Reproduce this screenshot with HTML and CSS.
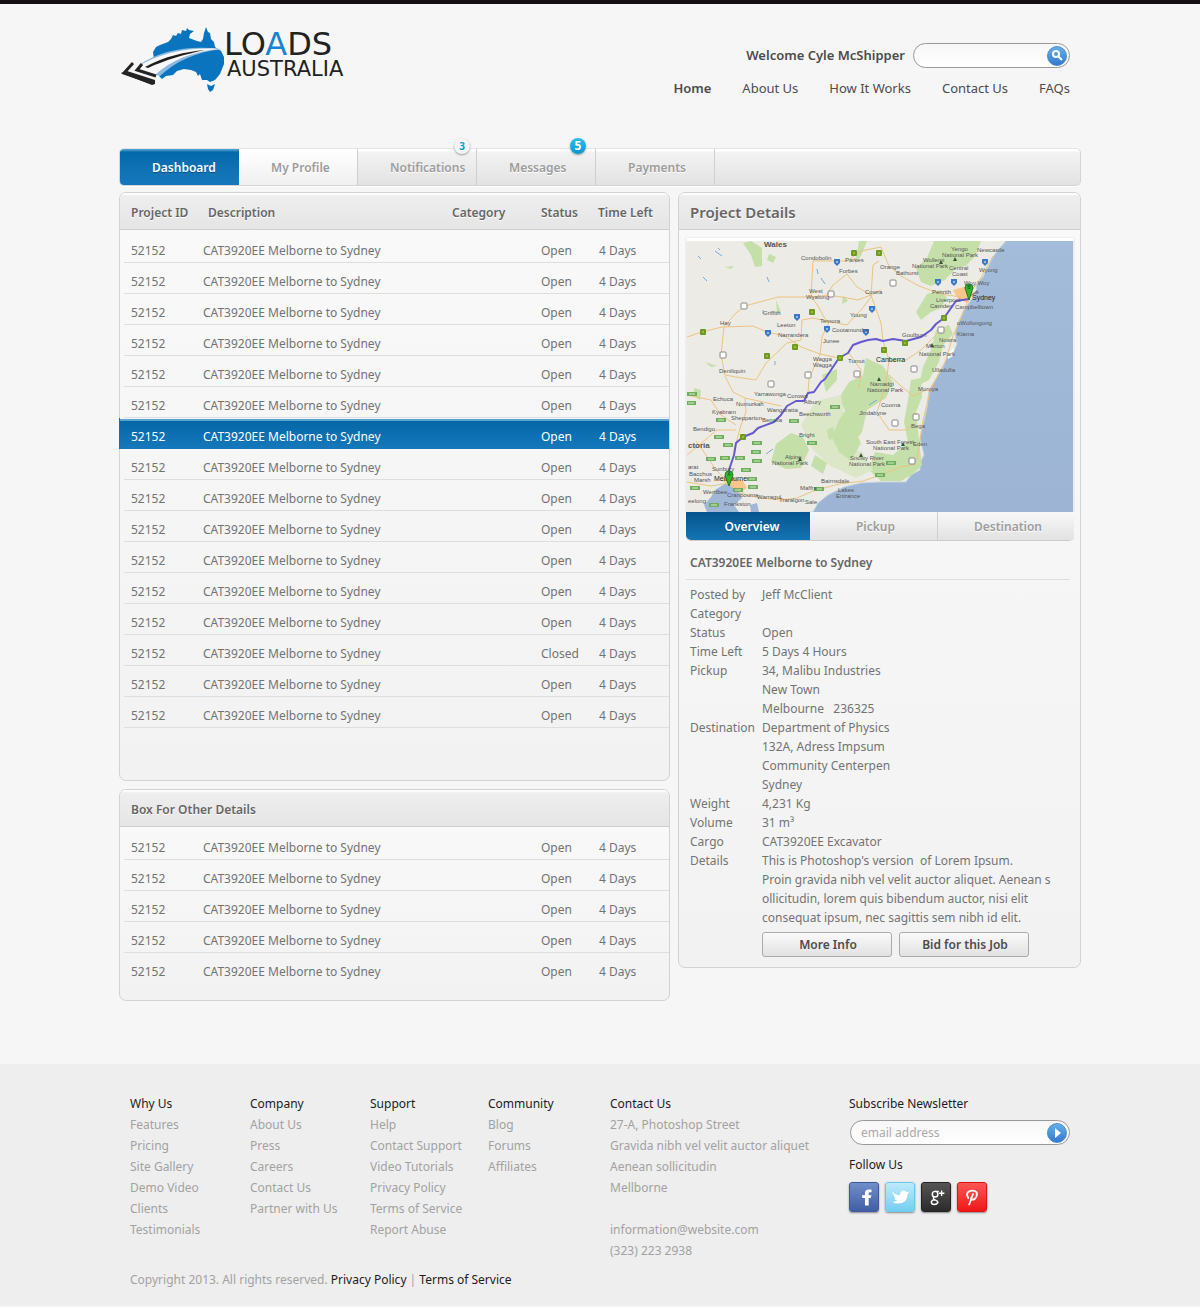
FILE: index.html
```html
<!DOCTYPE html>
<html lang="en">
<head>
<meta charset="utf-8">
<meta name="viewport" content="width=device-width, initial-scale=1">
<title>Loads Australia - Dashboard</title>
<link rel="stylesheet" href="styles.css">
</head>
<body>
<div class="wrap">
  <header class="header">
    <a class="logo" href="#" aria-label="Loads Australia">
      <svg width="236" height="72" viewBox="119 24 236 72">
        <path fill="#0a74bf" d="M154 60L153 52L156 47L160 45L168 42L171 39L173 35L176 36L178 33L181 34L182 30L186 31L187 28L189 30L194 31L190 34L189 38L197 41L201 42L203 39L204 33L206 27L208 32L210 33L211 39L214 42L215 47L221 51L224 57L224 64L220 74L215 80L210 82L207 80L202 80L200 74L198 76L196 72L191 70L184 69L177 71L173 75L166 76L162 79L159 76L162 71Z"/>
        <path fill="#0a74bf" d="M207 84L211 86L215 84L213 90L210 92L208 89Z"/>
        <path fill="#8db9de" d="M139 65C160 50 190 45 222 49C195 52 175 62 160 76L147 73Z"/>
        <path fill="#f7f7f7" d="M136 68C160 52 190 47 221 49C192 51 170 61 155 75L143 71Z"/>
        <path fill="#1d1d1d" d="M145 67C165 56 185 52 205 50C186 54 165 60 148 68Z"/>
        <path fill="none" stroke="#242424" stroke-width="3" d="M133 63L124 73L153 83"/>
        <path fill="none" stroke="#242424" stroke-width="3" d="M142 64L137 70L156 76"/>
        <path fill="#242424" d="M121 73L127 71L155 80V84L152 85Z"/>
        <text class="logo-text" x="224" y="55" font-size="32" fill="#222">LO<tspan fill="#1684d1">A</tspan>DS</text>
        <text class="logo-text" x="227" y="76" font-size="21" fill="#222">AUSTRALIA</text>
      </svg>
    </a>
    <div class="header-side">
      <form class="search-row">
        <label class="welcome" for="search">Welcome Cyle McShipper</label>
        <span class="pill pill-search">
          <input id="search" type="search">
          <button class="round" type="button" aria-label="Search"><svg width="20" height="20" viewBox="0 0 20 20"><circle cx="9" cy="8" r="3" fill="none" stroke="#fff" stroke-width="2"/><path d="M11 10L15 14" stroke="#fff" stroke-width="2"/></svg></button>
        </span>
      </form>
      <nav class="topnav">
        <a class="current" href="#">Home</a><a href="#">About Us</a><a href="#">How It Works</a><a href="#">Contact Us</a><a href="#">FAQs</a>
      </nav>
    </div>
  </header>

  <nav class="tabs">
    <a class="tab tab-active" href="#">Dashboard</a>
    <a class="tab tab-light" href="#">My Profile</a>
    <a class="tab" href="#">Notifications<span class="badge">3</span></a>
    <a class="tab" href="#">Messages<span class="badge badge-blue">5</span></a>
    <a class="tab" href="#">Payments</a>
  </nav>

  <main class="columns">
    <div class="stack">
      <section class="panel panel-projects">
        <table class="jobs">
          <colgroup><col class="c-id"><col class="c-desc"><col class="c-cat"><col class="c-status"><col class="c-time"></colgroup>
          <thead><tr><th>Project ID</th><th>Description</th><th>Category</th><th>Status</th><th>Time Left</th></tr></thead>
          <tbody>
            <tr><td>52152</td><td>CAT3920EE Melborne to Sydney</td><td></td><td>Open</td><td>4 Days</td></tr>
            <tr><td>52152</td><td>CAT3920EE Melborne to Sydney</td><td></td><td>Open</td><td>4 Days</td></tr>
            <tr><td>52152</td><td>CAT3920EE Melborne to Sydney</td><td></td><td>Open</td><td>4 Days</td></tr>
            <tr><td>52152</td><td>CAT3920EE Melborne to Sydney</td><td></td><td>Open</td><td>4 Days</td></tr>
            <tr><td>52152</td><td>CAT3920EE Melborne to Sydney</td><td></td><td>Open</td><td>4 Days</td></tr>
            <tr><td>52152</td><td>CAT3920EE Melborne to Sydney</td><td></td><td>Open</td><td>4 Days</td></tr>
            <tr class="selected"><td>52152</td><td>CAT3920EE Melborne to Sydney</td><td></td><td>Open</td><td>4 Days</td></tr>
            <tr><td>52152</td><td>CAT3920EE Melborne to Sydney</td><td></td><td>Open</td><td>4 Days</td></tr>
            <tr><td>52152</td><td>CAT3920EE Melborne to Sydney</td><td></td><td>Open</td><td>4 Days</td></tr>
            <tr><td>52152</td><td>CAT3920EE Melborne to Sydney</td><td></td><td>Open</td><td>4 Days</td></tr>
            <tr><td>52152</td><td>CAT3920EE Melborne to Sydney</td><td></td><td>Open</td><td>4 Days</td></tr>
            <tr><td>52152</td><td>CAT3920EE Melborne to Sydney</td><td></td><td>Open</td><td>4 Days</td></tr>
            <tr><td>52152</td><td>CAT3920EE Melborne to Sydney</td><td></td><td>Open</td><td>4 Days</td></tr>
            <tr><td>52152</td><td>CAT3920EE Melborne to Sydney</td><td></td><td>Closed</td><td>4 Days</td></tr>
            <tr><td>52152</td><td>CAT3920EE Melborne to Sydney</td><td></td><td>Open</td><td>4 Days</td></tr>
            <tr><td>52152</td><td>CAT3920EE Melborne to Sydney</td><td></td><td>Open</td><td>4 Days</td></tr>
          </tbody>
        </table>
      </section>
      <section class="panel panel-other">
        <h2 class="panel-head">Box For Other Details</h2>
        <table class="jobs">
          <colgroup><col class="c-id"><col class="c-desc"><col class="c-cat"><col class="c-status"><col class="c-time"></colgroup>
          <tbody>
            <tr><td>52152</td><td>CAT3920EE Melborne to Sydney</td><td></td><td>Open</td><td>4 Days</td></tr>
            <tr><td>52152</td><td>CAT3920EE Melborne to Sydney</td><td></td><td>Open</td><td>4 Days</td></tr>
            <tr><td>52152</td><td>CAT3920EE Melborne to Sydney</td><td></td><td>Open</td><td>4 Days</td></tr>
            <tr><td>52152</td><td>CAT3920EE Melborne to Sydney</td><td></td><td>Open</td><td>4 Days</td></tr>
            <tr class="last"><td>52152</td><td>CAT3920EE Melborne to Sydney</td><td></td><td>Open</td><td>4 Days</td></tr>
          </tbody>
        </table>
      </section>
    </div>

    <section class="panel panel-details">
      <h2 class="panel-head panel-head-large">Project Details</h2>
      <div class="details">
        <svg class="map" viewBox="686 241 386 271" role="img" aria-label="Route from Melbourne to Sydney">
          <defs>
            <g id="gs"><rect x="-3" y="-3" width="6" height="6" rx="1" fill="#6d9a22"/><path d="M-1 0H1" stroke="#d8d840"/></g>
            <g id="bs"><path d="M-3 -3H3V1L0 4L-3 1Z" fill="#3a78c8"/><path d="M-1 0H1" stroke="#fff"/></g>
            <g id="ws"><rect x="-3" y="-3" width="6" height="6" rx="1" fill="#fff" stroke="#888"/></g>
            <g id="gr"><rect x="-5" y="-2" width="10" height="4" fill="#6fae5c"/><path d="M-3 0H3" stroke="#d5ecc8"/></g>
            <g id="pk"><path d="M0 -3L2 1H-2Z" fill="#345334"/></g>
            <linearGradient id="sea" x1="0" y1="0" x2="0" y2="1"><stop offset="0" stop-color="#a2bcd9"/><stop offset="1" stop-color="#9db4d4"/></linearGradient>
          </defs>
          <rect x="686" y="241" width="386" height="271" fill="url(#sea)"/>
          <path fill="#ecebe6" stroke="#c4d2dc" d="M680 235H1010L1005 241L997 250L992 257L987 267L982 277L975 285L976 293L970 300L963 310L957 323L954 333L956 344L953 351L948 353L942 367L935 379L928 390L926 408L922 425L919 438L923 455L919 463L919 470L910 475L905 482L880 482L860 483L843 487L827 495L817 503L812 512L680 516Z"/>
          <g fill="#c5dfa8">
            <path d="M933 241H980L974 256L965 266L955 268L944 280L930 286L920 282L915 268L926 258Z"/>
            <path d="M926 294L940 290L946 298L940 308L930 312L920 320L915 312Z"/>
            <path d="M935 330L948 325L952 334L942 345L938 362L928 380L918 385L922 367L930 350Z"/>
            <path d="M910 380L920 378L921 397L915 412L918 440L921 465L912 474L900 481L880 481L868 470L874 452L892 455L907 442L903 422L907 400Z"/>
            <path d="M865 358L882 366L892 382L885 398L866 410L861 432L850 447L843 440L846 415L838 398L848 382L862 375Z"/>
            <path d="M775 444L790 433L802 437L808 450L800 468L785 469L770 462Z"/>
            <path d="M750 241L761 248L761 266L754 267L750 255L742 243Z"/>
            <path d="M768 254L775 257L772 263L766 260ZM858 241H866L860 256L854 264ZM775 300L780 312L776 314ZM842 295L847 301L841 304ZM704 362L716 366L710 367ZM693 388L700 390L699 400L693 396ZM724 267L733 266L730 269Z"/>
            <path d="M821 375L836 369L836 380L825 392ZM814 455L826 463L822 474L810 466Z"/>
          </g>
          <path fill="#dce7c8" d="M815 401L840 395L844 425L835 442L861 452L872 470L855 478L828 465L812 450L800 425Z"/>
          <path fill="#c5dfa8" d="M838 420L846 408L852 428L860 443L850 461L838 452L831 437ZM826 430L832 427L834 438L828 440Z"/>
          <path fill="#fff" d="M947 353L953 348L952 356L947 359Z"/>
          <path fill="#a0b8d6" d="M714 490L725 483L735 487L741 498L733 505L738 512H706L703 505L710 497ZM749 505L756 503L758 512H750Z"/>
          <path fill="#f9c58b" d="M720 480L730 476L742 481L746 488L738 493L727 484ZM952 290L966 286L973 293L967 303L957 299Z"/>
          <g fill="none" stroke="#79a7dd"><path d="M714 251L721 256M697 256L700 259M702 277L706 281M717 248L719 250M766 277L768 282M816 269L817 274M820 278L824 284M762 310V314M774 361V365M765 454L772 449M868 405L876 400"/></g>
          <g fill="none" stroke="#edc37f" stroke-width="1">
            <path d="M686 337L701 332L721 327L752 326L766 332L784 336L800 347L819 354L838 358"/>
            <path d="M723 327L735 313L744 306L777 297L812 297L828 295L846 298L857 300L870 295L880 290"/>
            <path d="M723 327L720 355L724 375L735 377L755 380L765 363L786 343L800 340L801 320L812 318L830 322L846 325L852 318L860 310L870 297L872 265L878 261"/>
            <path d="M812 261L810 296L817 306L824 319L828 322L821 337L819 355L808 378L807 394"/>
            <path d="M812 261H846L860 251L880 247L888 266L900 276L918 286L940 294L960 297"/>
            <path d="M870 295L880 323L882 341L888 360L886 376L880 400L876 412L888 430L905 430L914 423"/>
            <path d="M870 295L856 287L846 274L832 285L825 296"/>
            <path d="M724 376L732 392L744 398L745 412L740 425L735 443M744 398L762 402L780 406M686 395L710 400L720 415L735 425"/>
            <path d="M728 483L715 470L705 455L695 441M728 483L745 495L760 498L780 500L796 498L812 491L838 484L862 481L880 475L900 467L915 464"/>
            <path d="M888 361L905 360L920 350L940 330M888 375L900 386L912 396L925 390M968 298L960 318L952 336L944 362L930 388L922 420L916 460"/>
            <path d="M992 256L978 281L967 295M848 353L860 370L858 388M686 455L704 440L716 430L735 430M686 482L710 486L728 483"/>
          </g>
          <path fill="none" stroke="#6557d0" stroke-width="2" stroke-linejoin="round" d="M728 483L728 470L733 455L735 443L742 437L752 433L757 428L773 422L780 415L786 406L795 401L803 401L807 393L813 392L820 382L824 379L832 367L838 358L847 353L852 345L860 342L867 340L875 339L882 341L892 339L905 341L920 337L930 330L935 324L943 318L950 308L955 301L968 299"/>
          <use href="#gs" x="853" y="253"/><use href="#gs" x="878" y="253"/><use href="#gs" x="811" y="312"/><use href="#gs" x="702" y="332"/><use href="#gs" x="794" y="347"/><use href="#gs" x="766" y="356"/><use href="#gs" x="839" y="358"/><use href="#gs" x="943" y="318"/><use href="#gs" x="904" y="343"/><use href="#gs" x="883" y="350"/><use href="#gs" x="742" y="437"/>
          <use href="#bs" x="836" y="262"/><use href="#bs" x="871" y="309"/><use href="#bs" x="796" y="317"/><use href="#bs" x="767" y="333"/><use href="#bs" x="826" y="329"/><use href="#bs" x="865" y="332"/><use href="#bs" x="937" y="282"/><use href="#bs" x="953" y="282"/><use href="#bs" x="984" y="262"/>
          <use href="#ws" x="743" y="306"/><use href="#ws" x="830" y="294"/><use href="#ws" x="722" y="355"/><use href="#ws" x="807" y="375"/><use href="#ws" x="856" y="374"/><use href="#ws" x="770" y="384"/><use href="#ws" x="892" y="283"/><use href="#ws" x="940" y="330"/><use href="#ws" x="913" y="369"/><use href="#ws" x="915" y="417"/><use href="#ws" x="894" y="423"/><use href="#ws" x="911" y="461"/>
          <use href="#gr" x="691" y="394"/><use href="#gr" x="690" y="403"/><use href="#gr" x="720" y="420"/><use href="#gr" x="718" y="437"/><use href="#gr" x="727" y="445"/><use href="#gr" x="756" y="443"/><use href="#gr" x="755" y="452"/><use href="#gr" x="756" y="461"/><use href="#gr" x="739" y="458"/><use href="#gr" x="710" y="459"/><use href="#gr" x="724" y="458"/><use href="#gr" x="745" y="470"/><use href="#gr" x="751" y="479"/><use href="#gr" x="752" y="487"/><use href="#gr" x="694" y="488"/><use href="#gr" x="713" y="505"/><use href="#gr" x="793" y="421"/><use href="#gr" x="811" y="443"/><use href="#gr" x="834" y="407"/><use href="#gr" x="818" y="489"/><use href="#gr" x="890" y="463"/><use href="#gr" x="879" y="475"/><use href="#gr" x="737" y="490"/>
          <use href="#pk" x="940" y="263"/><use href="#pk" x="954" y="260"/><use href="#pk" x="931" y="346"/><use href="#pk" x="878" y="380"/><use href="#pk" x="799" y="460"/><use href="#pk" x="860" y="456"/><use href="#pk" x="902" y="445"/>
          <g class="map-labels">
            <text class="map-region" x="763" y="247">Wales</text><text class="map-region" x="687" y="448">ctoria</text>
            <text x="800" y="260">Condobolin</text><text x="844" y="262">Parkes</text><text x="838" y="273">Forbes</text><text x="808" y="293">West</text><text x="805" y="299">Wyalong</text><text x="864" y="294">Cowra</text><text x="762" y="315">Griffith</text><text x="719" y="325">Hay</text><text x="776" y="327">Leeton</text><text x="777" y="337">Narrandera</text><text x="819" y="323">Temora</text><text x="849" y="317">Young</text><text x="831" y="332">Cootamundra</text><text x="822" y="343">Junee</text><text x="812" y="361">Wagga</text><text x="812" y="367">Wagga</text><text x="847" y="363">Tumut</text><text x="718" y="373">Deniliquin</text>
            <text x="879" y="269">Orange</text><text x="895" y="275">Bathurst</text><text x="922" y="262">Wollemi</text><text x="911" y="268">National Park</text><text x="950" y="251">Yengo</text><text x="941" y="257">National Park</text><text x="976" y="252">Newcastle</text><text x="948" y="270">Central</text><text x="951" y="276">Coast</text><text x="978" y="272">Wyong</text><text x="963" y="285">Woy Woy</text><text x="931" y="294">Penrith</text><text x="935" y="302">Liverpool</text><text x="929" y="308">Camden</text><text x="954" y="309">Campbelltown</text><text class="map-city" x="971" y="300">Sydney</text><text x="956" y="325">oWollongong</text><text x="956" y="336">Kiama</text><text x="938" y="342">Nowra</text><text x="901" y="337">Goulburn</text><text x="925" y="348">Morton</text><text x="918" y="356">National Park</text><text class="map-city" x="875" y="362">Canberra</text><text x="931" y="372">Ulladulla</text><text x="869" y="386">Namadgi</text><text x="866" y="392">National Park</text><text x="917" y="391">Moruya</text><text x="880" y="407">Cooma</text><text x="910" y="428">Bega</text><text x="912" y="446">Eden</text><text x="865" y="444">South East Forest</text><text x="872" y="450">National Park</text><text x="858" y="415">Jindabyne</text>
            <text x="712" y="401">Echuca</text><text x="735" y="406">Numurkah</text><text x="753" y="396">Yarrawonga</text><text x="786" y="398">Corowa</text><text x="803" y="404">Albury</text><text x="711" y="414">Kyabram</text><text x="730" y="420">Shepparton</text><text x="766" y="412">Wangaratta</text><text x="761" y="422">Benalla</text><text x="798" y="416">Beechworth</text><text x="798" y="437">Bright</text><text x="692" y="431">Bendigo</text><text x="784" y="459">Alpine</text><text x="771" y="465">National Park</text><text x="849" y="460">Snowy River</text><text x="848" y="466">National Park</text><text x="820" y="483">Bairnsdale</text><text x="837" y="492">Lakes</text><text x="835" y="498">Entrance</text><text x="799" y="490">Maffra</text><text x="804" y="504">Sale</text><text x="778" y="502">Traralgon</text><text x="756" y="499">Warragul</text><text x="726" y="497">Cranbourne</text><text x="723" y="506">Frankston</text><text x="702" y="494">Werribee</text><text x="687" y="503">eelong</text><text x="711" y="471">Sunbury</text><text x="688" y="476">Bacchus</text><text x="693" y="482">Marsh</text><text x="687" y="469">arat</text><text class="map-city" x="713" y="481">Melbourne</text>
          </g>
          <g stroke="#27791d"><path fill="#39b52d" d="M728 486L724 475A4 4 0 1 1 732 475ZM968 300L964 288A4 4 0 1 1 972 288Z"/></g>
          <path fill="#445" opacity=".6" d="M969 296L976 290L978 293Z"/>
          <g class="map-pins"><text x="728" y="476">A</text><text x="968" y="289">B</text></g>
        </svg>
        <nav class="subtabs"><a class="subtab subtab-active" href="#">Overview</a><a class="subtab subtab-mid" href="#">Pickup</a><a class="subtab subtab-end" href="#">Destination</a></nav>
        <h3 class="job-title">CAT3920EE Melborne to Sydney</h3>
        <dl class="facts">
          <dt>Posted by</dt><dd>Jeff McClient</dd>
          <dt>Category</dt><dd></dd>
          <dt>Status</dt><dd>Open</dd>
          <dt>Time Left</dt><dd>5 Days 4 Hours</dd>
          <dt>Pickup</dt><dd>34, Malibu Industries<br>New Town<br>Melbourne &nbsp; 236325</dd>
          <dt>Destination</dt><dd>Department of Physics<br>132A, Adress Impsum<br>Community Centerpen<br>Sydney</dd>
          <dt>Weight</dt><dd>4,231 Kg</dd>
          <dt>Volume</dt><dd>31 m³</dd>
          <dt>Cargo</dt><dd>CAT3920EE Excavator</dd>
          <dt>Details</dt><dd>This is Photoshop's version &nbsp;of Lorem Ipsum.<br>Proin gravida nibh vel velit auctor aliquet. Aenean s<br>ollicitudin, lorem quis bibendum auctor, nisi elit<br>consequat ipsum, nec sagittis sem nibh id elit.</dd>
        </dl>
        <div class="actions"><button class="btn" type="button">More Info</button><button class="btn" type="button">Bid for this Job</button></div>
      </div>
    </section>
  </main>
</div>

<footer class="footer">
  <div class="footer-inner">
    <div class="footer-cols">
      <div><h4>Why Us</h4><a href="#">Features</a><a href="#">Pricing</a><a href="#">Site Gallery</a><a href="#">Demo Video</a><a href="#">Clients</a><a href="#">Testimonials</a></div>
      <div><h4>Company</h4><a href="#">About Us</a><a href="#">Press</a><a href="#">Careers</a><a href="#">Contact Us</a><a href="#">Partner with Us</a></div>
      <div><h4>Support</h4><a href="#">Help</a><a href="#">Contact Support</a><a href="#">Video Tutorials</a><a href="#">Privacy Policy</a><a href="#">Terms of Service</a><a href="#">Report Abuse</a></div>
      <div><h4>Community</h4><a href="#">Blog</a><a href="#">Forums</a><a href="#">Affiliates</a></div>
      <div><h4>Contact Us</h4><p>27-A, Photoshop Street<br>Gravida nibh vel velit auctor aliquet<br>Aenean sollicitudin<br>Mellborne<br><br></p><a href="#">information@website.com</a><p>(323) 223 2938</p></div>
      <div>
        <form><label class="foot-label" for="email">Subscribe Newsletter</label>
          <span class="pill pill-email"><input id="email" type="email" placeholder="email address"><button class="round" type="button" aria-label="Subscribe"><svg width="20" height="20" viewBox="0 0 20 20"><path d="M8 5L14 10L8 15Z" fill="#fff"/></svg></button></span>
        </form>
        <h4 class="follow">Follow Us</h4>
        <div class="social">
          <a class="fb" href="#" aria-label="Facebook"><svg viewBox="0 0 30 30"><path fill="#fff" d="M16 24V16H13V13H16V11Q16 7 20 7H23V10H21Q20 10 20 11V13H23L22 16H20V24Z"/></svg></a>
          <a class="tw" href="#" aria-label="Twitter"><svg viewBox="0 0 30 30"><path fill="#fff" d="M7 9Q10 13 15 13Q15 8 19 8Q21 8 22 10L25 9L23 12Q23 22 13 22Q9 22 7 20Q10 20 12 19Q9 18 9 16H11Q8 15 8 12L9 13Q6 11 7 9Z"/></svg></a>
          <a class="gp" href="#" aria-label="Google Plus"><svg viewBox="0 0 30 30"><g fill="none" stroke="#fff" stroke-width="1.5"><ellipse cx="14" cy="12" rx="3" ry="3"/><path d="M14 9H18M13 15Q11 17 14 18T17 21Q16 23 13 23T10 20Q11 18 14 18M18 11H24M21 8V14"/></g></svg></a>
          <a class="pt" href="#" aria-label="Pinterest"><svg viewBox="0 0 30 30"><path fill="none" stroke="#fff" stroke-width="2" stroke-linecap="round" d="M11 16Q8 11 12 9Q17 7 20 10Q21 14 18 17Q15 19 14 16M16 12L12 23"/></svg></a>
        </div>
      </div>
    </div>
    <p class="copyright">Copyright 2013. All rights reserved. <a href="#">Privacy Policy</a> | <a href="#">Terms of Service</a></p>
  </div>
</footer>
</body>
</html>
```
FILE: styles.css
```css
* { box-sizing: border-box; }
body { margin: 0; border-top: 4px solid #130f12; background: #f6f6f6; font: 12px/19px "Noto Sans", sans-serif; color: #737373; }
a { color: inherit; text-decoration: none; }
h2, h3, h4, p, dl, dd { margin: 0; }
button, input { font: inherit; }
.wrap { max-width: 962px; margin: 0 auto; }

.header { display: flex; justify-content: space-between; height: 144px; padding: 20px 11px 0 0; }
.logo svg { display: block; }
.logo-text { font-family: "DejaVu Sans", sans-serif; }
.header-side { display: flex; flex-direction: column; align-items: flex-end; gap: 11px; padding-top: 19px; color: #4c4c4c; font-size: 13px; }
.search-row { display: flex; align-items: center; gap: 8px; }
.welcome { font-weight: 600; }
.pill { display: flex; align-items: center; height: 25px; padding: 0 2px 0 10px; border: 1px solid #999; border-radius: 13px; background: linear-gradient(#f7f7f7, #fff); }
.pill-search { width: 157px; }
.pill input { flex: 1; min-width: 0; padding: 0; border: 0; outline: 0; background: none; color: #666; }
.pill input::placeholder { color: #aaa; opacity: 1; }
.round { flex: none; width: 20px; height: 20px; padding: 0; border: 1px solid #4a8cc8; border-radius: 50%; background: linear-gradient(#64b0ea, #3579d0); }
.round svg { display: block; margin: -1px; }
.topnav { display: flex; gap: 31px; }
.topnav .current { font-weight: 600; }

.tabs { display: flex; height: 38px; border: 1px solid #d4d4d4; border-top-color: #e4e4e4; border-radius: 5px; background: linear-gradient(#fff 2px, #f3f3f3 3px, #e2e2e2); box-shadow: 0 1px #fff; }
.tab { position: relative; width: 119px; padding: 9px 0 0 32px; border-right: 1px solid #cfcfcf; color: #9c9c9c; font-weight: 600; text-shadow: 0 1px #fff; white-space: nowrap; }
.tab-light { background: linear-gradient(#fff, #f0f0f0); }
.tab-active { border-right: 0; border-radius: 4px 0 0 4px; background: linear-gradient(#4a9bd0 1px, #0469aa 3px, #1779bd); color: #fff; text-shadow: 0 1px #045389; }
.badge { position: absolute; top: -11px; right: 6px; width: 16px; height: 16px; border-radius: 50%; background: #f4f4f4; box-shadow: 0 1px 2px #999; color: #0a9ad0; font-size: 10px; line-height: 16px; text-align: center; font-weight: 700; }
.badge-blue { right: 9px; background: linear-gradient(#2cc0ee, #0996d0); color: #fff; text-shadow: none; font-size: 12px; }

.columns { display: grid; grid-template-columns: 551fr 403fr; gap: 8px; align-items: start; padding-top: 6px; }
.stack { display: grid; gap: 8px; }
.panel { border: 1px solid #d2d2d2; border-radius: 7px; background: linear-gradient(#f9f9f9 30px, #f2f2f2); }
.panel-projects { padding-bottom: 52px; }
.panel-other { padding-bottom: 16px; }
.panel-head, .jobs th { height: 37px; border-bottom: 1px solid #cfcfcf; background: linear-gradient(#fff 1px, #eee 3px, #e5e5e5); color: #666; font-size: 12px; font-weight: 600; text-align: left; text-shadow: 0 1px #fff; }
.panel-head { padding: 10px 11px 0; border-radius: 6px 6px 0 0; }
.panel-head-large { font-size: 15px; }
.jobs { width: 100%; border-spacing: 0; table-layout: fixed; }
.c-id { width: 83px; }
.c-cat { width: 89px; }
.c-status { width: 57px; }
.c-time { width: 71px; }
.jobs th { padding: 2px 0 0; white-space: nowrap; }
.jobs th:first-child { padding-left: 11px; border-top-left-radius: 6px; }
.jobs th:nth-child(2) { padding-left: 5px; }
.jobs th:last-child { border-top-right-radius: 6px; }
.jobs td { height: 31px; padding: 5px 0 0; white-space: nowrap; }
.jobs tbody tr:first-child td { height: 33px; padding-top: 7px; }
.jobs td:first-child { padding-left: 11px; }
.jobs td:nth-child(5) { padding-left: 1px; }
.jobs tbody tr { background: linear-gradient(#dedede, #dedede) right bottom / calc(100% - 4px) 1px no-repeat; }
.jobs tbody .last { background: none; }
.jobs tbody .selected { background: linear-gradient(#f4f4f4 1px, #59a3d0 1px, #59a3d0 3px, #0467a8 3px, #1478ba); color: #fff; box-shadow: -1px 0 #0c70b2; }

.details { padding: 8px 6px 10px 7px; }
.map { display: block; width: 100%; border: 1px solid #eee; border-top: 3px solid #fff; border-bottom: 0; box-shadow: 0 0 1px #bbb; }
.map-labels { font: 6px "Liberation Sans", sans-serif; fill: #555; }
.map-labels .map-city { font-size: 7px; fill: #222; }
.map-labels .map-region { font-size: 8px; font-weight: 700; }
.map-pins { font: 700 5px "Liberation Sans", sans-serif; text-anchor: middle; fill: #063; }
.subtabs { display: grid; grid-template-columns: 124fr 128fr 136fr; height: 28px; border-radius: 0 0 5px 5px; background: linear-gradient(#f8f8f8, #e2e2e2); box-shadow: 0 1px #ccc; }
.subtab { padding-top: 5px; color: #9c9c9c; font-weight: 600; text-align: center; text-shadow: 0 1px #fff; }
.subtab-active { padding-left: 8px; border-radius: 0 0 0 5px; background: linear-gradient(#04558d, #1474b3); color: #fff; text-shadow: 0 1px #045389; }
.subtab-mid, .subtab-end { padding-left: 4px; border-right: 1px solid #d0d0d0; }
.subtab-end { border-right: 0; }
.job-title { margin-right: 4px; padding: 13px 4px 7px; border-bottom: 1px solid #dedede; font-size: 12px; font-weight: 600; color: #666; }
.facts { display: grid; grid-template-columns: 72px 1fr; padding: 5px 0 0 4px; }
.facts dt, .facts dd { min-height: 19px; white-space: nowrap; }
.actions { display: flex; gap: 7px; padding: 5px 0 0 76px; }
.btn { width: 130px; height: 25px; padding: 0 0 0 2px; border: 1px solid #aaa; border-radius: 3px; background: linear-gradient(#fafafa, #e2e2e2); color: #4c4c4c; font-weight: 600; }

.footer { margin-top: 63px; background: #eee; color: #a2a2a2; }
.footer-inner { max-width: 940px; margin: 0 auto; padding: 29px 0 17px; }
.footer-cols { display: grid; grid-template-columns: 120fr 120fr 118fr 122fr 239fr 221fr; line-height: 21px; white-space: nowrap; }
.footer-cols h4, .foot-label { display: block; color: #1c1c1c; font-size: 12px; font-weight: 400; }
.footer-cols > div > a { display: block; }
.pill-email { width: 220px; margin: 6px 0 9px 1px; }
.social { display: flex; gap: 6px; padding-top: 7px; }
.social a { width: 30px; height: 30px; border-radius: 3px; box-shadow: 0 1px 2px #888; }
.social svg { display: block; }
.fb { border: 1px solid #3d5a9c; background: linear-gradient(#6f8dc8, #405fa5); }
.tw { border: 1px solid #6cc9e8; background: linear-gradient(#bdeafa, #74cef0); }
.gp { border: 1px solid #222; background: linear-gradient(#555, #2b2b2b); }
.pt { border: 1px solid #d11; background: linear-gradient(#ff5555, #f01818); }
.copyright { padding-top: 9px; }
.copyright a { color: #1c1c1c; }
```
